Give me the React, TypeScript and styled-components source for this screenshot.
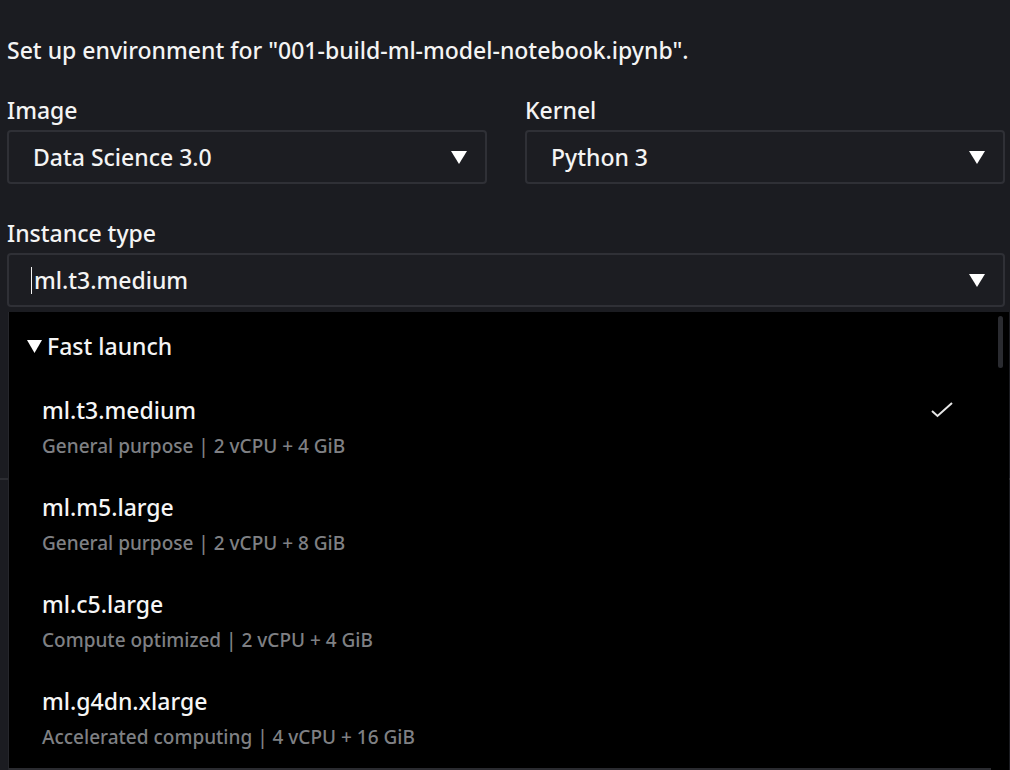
import React from 'react'
import styled, { createGlobalStyle } from 'styled-components'

const GlobalStyle = createGlobalStyle`
  html, body {
    margin: 0;
    padding: 0;
    background: #1b1c21;
    overflow: hidden;
  }
  body {
    font-family: "Noto Sans", "Open Sans", sans-serif;
    font-weight: 500;
    color: #f4f4f4;
  }
`

const Page = styled.div`
  width: 998px;
  height: 770px;
  padding: 0 5px 0 7px;
  overflow: hidden;
`

const Heading = styled.p`
  margin: 36px 0 0;
  font-size: 23px;
  line-height: 28px;
`

const FieldRow = styled.div`
  display: flex;
  gap: 38px;
  margin-top: 32px;
`

const Field = styled.div<{ $spaced?: boolean }>`
  position: relative;
  flex: 1;
  margin-top: ${p => (p.$spaced ? '35px' : '0')};
`

const Label = styled.div`
  font-size: 23px;
  line-height: 28px;
  margin-bottom: 6px;
`

const SelectBox = styled.div`
  display: flex;
  align-items: center;
  height: 50px;
  padding: 0 18px 0 24px;
  border: 2px solid #2f3036;
  border-radius: 4px;
  background: #1c1d22;
  font-size: 23px;
`

const Value = styled.span`
  flex: 1;
  display: flex;
  align-items: center;
`

const Cursor = styled.span`
  display: inline-block;
  width: 1px;
  height: 27px;
  background: #f4f4f4;
  margin: 0 2px 0 -2px;
`

const Caret = styled.svg`
  width: 16px;
  height: 13px;
  flex-shrink: 0;
`

const Divider = styled.div`
  height: 2px;
  background: #2c2d32;
  margin: 171px -5px 0 -7px;
`

const Menu = styled.div`
  position: absolute;
  top: calc(100% + 5px);
  left: 1px;
  width: 1000px;
  height: 470px;
  display: flex;
  background: #000;
  border-left: 1px solid #26272c;
  z-index: 2;
`

const List = styled.div`
  flex: 1;
`

const Track = styled.div`
  width: 18px;
  padding-top: 4px;
  display: flex;
  justify-content: center;
`

const Thumb = styled.div`
  width: 5px;
  height: 52px;
  border-radius: 3px;
  background: #2a2b30;
`

const GroupHeader = styled.div`
  display: flex;
  align-items: center;
  gap: 5px;
  padding: 20px 0 20px 18px;
  font-size: 23px;
  line-height: 28px;
  color: #f4f4f4;
`

const Group = styled.div`
  border-bottom: 2px solid #2a2b30;
`

const Option = styled.div`
  padding: 16px 38px 18px 33px;
`

const OptionTop = styled.div`
  display: flex;
  align-items: center;
  justify-content: space-between;
`

const OptionName = styled.div`
  font-size: 23px;
  line-height: 28px;
  color: #f6f6f6;
`

const OptionMeta = styled.div`
  margin-top: 9px;
  font-size: 19px;
  line-height: 26px;
  color: #7f8084;
`

const DownCaret = () => (
  <Caret viewBox="0 0 16 13">
    <polygon points="0,0 16,0 8,13" fill="#ffffff" />
  </Caret>
)

const Check = () => (
  <svg width="22" height="16" viewBox="0 0 22 16">
    <polyline points="1,9 6.5,14 21,1" fill="none" stroke="#e6e6e6" strokeWidth="2" />
  </svg>
)

const options = [
  { name: 'ml.t3.medium', meta: 'General purpose | 2 vCPU + 4 GiB', selected: true },
  { name: 'ml.m5.large', meta: 'General purpose | 2 vCPU + 8 GiB' },
  { name: 'ml.c5.large', meta: 'Compute optimized | 2 vCPU + 4 GiB' },
  { name: 'ml.g4dn.xlarge', meta: 'Accelerated computing | 4 vCPU + 16 GiB' },
]

const App = () => (
  <>
    <GlobalStyle />
    <Page>
      <Heading>Set up environment for "001-build-ml-model-notebook.ipynb".</Heading>
      <FieldRow>
        <Field>
          <Label>Image</Label>
          <SelectBox>
            <Value>Data Science 3.0</Value>
            <DownCaret />
          </SelectBox>
        </Field>
        <Field>
          <Label>Kernel</Label>
          <SelectBox>
            <Value>Python 3</Value>
            <DownCaret />
          </SelectBox>
        </Field>
      </FieldRow>
      <Field $spaced>
        <Label>Instance type</Label>
        <SelectBox>
          <Value>
            <Cursor />
            ml.t3.medium
          </Value>
          <DownCaret />
        </SelectBox>
        <Menu>
          <List>
            <GroupHeader>
              <svg width="15" height="13" viewBox="0 0 15 13">
                <polygon points="0,0 15,0 7.5,13" fill="#ffffff" />
              </svg>
              Fast launch
            </GroupHeader>
            <Group>
              {options.map(o => (
                <Option key={o.name}>
                  <OptionTop>
                    <OptionName>{o.name}</OptionName>
                    {o.selected && <Check />}
                  </OptionTop>
                  <OptionMeta>{o.meta}</OptionMeta>
                </Option>
              ))}
            </Group>
          </List>
          <Track>
            <Thumb />
          </Track>
        </Menu>
      </Field>
      <Divider />
    </Page>
  </>
)

export default App
